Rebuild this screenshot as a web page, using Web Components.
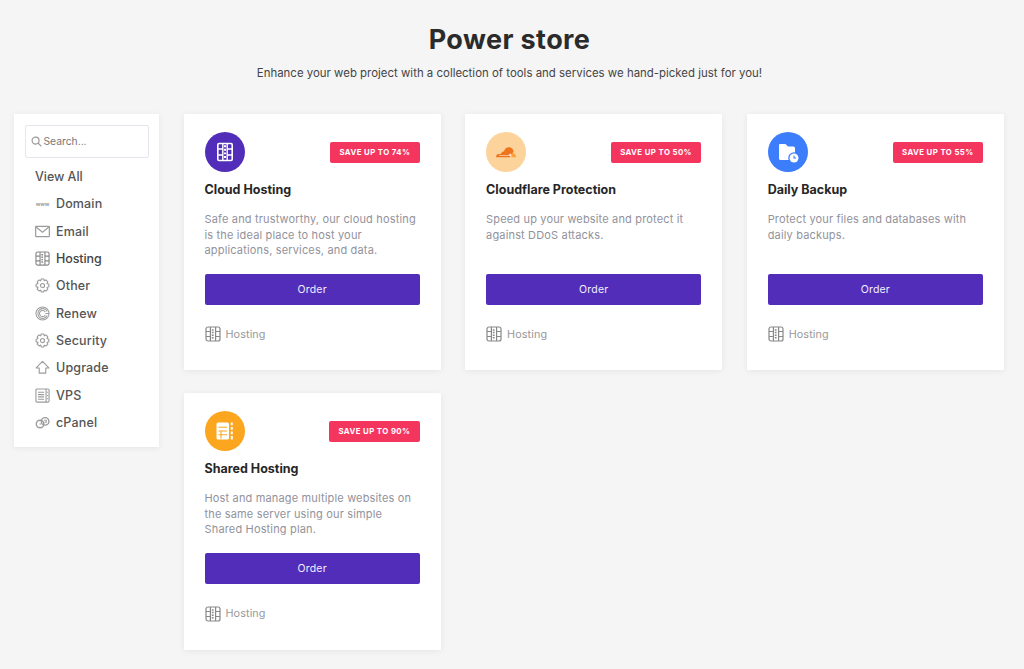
<!DOCTYPE html>
<html lang="en"><head><meta charset="utf-8"><title>Power store</title>
<style>
html,body{margin:0;padding:0;background:#f5f5f5;font-family:Inter,"Liberation Sans",sans-serif;}
body{height:669px;overflow:hidden}
</style></head><body>
<power-store>
  <store-header slot="header" title="Power store" sub="Enhance your web project with a collection of tools and services we hand-picked just for you!"></store-header>
  <store-sidebar slot="side"></store-sidebar>
  <store-card slot="cards" icon="hosting" color="#512dba" save="SAVE UP TO 74%" name="Cloud Hosting">Safe and trustworthy, our cloud hosting is the ideal place to host your applications, services, and data.</store-card>
  <store-card slot="cards" icon="cloud" color="#fdd39c" save="SAVE UP TO 50%" name="Cloudflare Protection">Speed up your website and protect it against DDoS attacks.</store-card>
  <store-card slot="cards" icon="backup" color="#3b7dfb" save="SAVE UP TO 55%" name="Daily Backup">Protect your files and databases with daily backups.</store-card>
  <store-card slot="cards" icon="shared" color="#fca61f" save="SAVE UP TO 90%" name="Shared Hosting">Host and manage multiple websites on the same server using our simple Shared Hosting plan.</store-card>
</power-store>
<script>
const hostingGlyph = c => `<g fill="none" stroke="${c}" stroke-width="1.2"><rect x="1" y="1" width="14" height="14" rx="2"/><path d="M5.400 1v14M10.600 1v14"/><path d="M1 5.500h4.400M1 10.500h4.400M10.600 5.500H15M10.600 10.500H15"/><path d="M6.800 4h1.800M6.800 6.600h1.800M6.800 9.200h1.800M6.800 11.800h1.800" stroke-width="1.500"/></g>`;
const gearPath = "M6.600 1h2.800l.5 2 1.800-.9 2 2-.9 1.800 2 .7v2.800l-2 .7.9 1.800-2 2-1.800-.9-.7 1.900H6.600l-.5-2-1.800.9-2-2 .9-1.800-2-.7V6.600l2-.7-.9-1.800 2-2 1.800.9z";
const glyphs = {
  www: `<text x="8" y="10.500" text-anchor="middle" font-family="Inter,sans-serif" font-size="5.800" font-weight="700" fill="#a0a0a0" letter-spacing="-.2">www</text>`,
  mail: `<g fill="none" stroke="#9c9c9c" stroke-width="1.300"><rect x=".7" y="2.600" width="14.600" height="10.800" rx=".6"/><path d="M.8 3l7.200 5.800L15.200 3"/></g>`,
  hosting: hostingGlyph('#888'),
  gear: `<g fill="none" stroke="#9c9c9c" stroke-width="1.200" stroke-linejoin="round"><path d="${gearPath}"/><circle cx="8" cy="8" r="2.200"/></g>`,
  renew: `<g fill="none" stroke="#9c9c9c" stroke-width="1.100"><circle cx="8" cy="8" r="7"/><path d="M13 5.800A5.200 5.200 0 1 0 13 10.200"/><path d="M11 6.500A3.300 3.300 0 1 0 11 9.500M11 8h4"/></g>`,
  up: `<path d="M8 1.500L1.200 8.500h3.300v5.500h7V8.500h3.300z" fill="none" stroke="#9c9c9c" stroke-width="1.200" stroke-linejoin="round"/>`,
  vps: `<g fill="none" stroke="#9c9c9c" stroke-width="1.200"><rect x="1" y="1" width="14" height="14" rx="1.200"/><path d="M11.800 1v14M3.200 4.500h6.500M3.200 7h6.500M3.200 9.500h6.500M3.200 12h6.500M13.400 4v1M13.400 7.500v1M13.400 11v1"/></g>`,
  cpanel: `<g fill="none" stroke="#9c9c9c" stroke-width="1.500"><circle cx="5.400" cy="9.600" r="4"/><circle cx="10.800" cy="6.800" r="4"/><path d="M4.800 9.500h2M9.800 5.600h2.200v2.200H10" stroke-width="1.100"/></g>`
};
const bigIcons = {
  hosting: `<svg width="20" height="20" viewBox="0 0 20 20" fill="none" stroke="#fff"><rect x="2.800" y="1.500" width="14.400" height="17" rx="1.200" stroke-width="1.600"/><path d="M7.800 1.500v17M12.200 1.500v17" stroke-width="1.400"/><path d="M2.800 7h5M2.800 13h5M12.200 7h5M12.200 13h5" stroke-width="1.500"/><path d="M9 4.200h2M9 7.800h2M9 11.400h2M9 15h2" stroke-width="1.900"/></svg>`,
  cloud: `<svg width="22" height="11" viewBox="0 0 23 12"><path fill="#f0741c" d="M15.700 11.300H.7a3.400 3.400 0 0 1 3.300-3.600c.6-.1 1.200 0 1.700.3C6.400 5.700 8 4.600 9.400 4.600c.6-2.500 2.800-4.200 5.200-4.200 2.700 0 4.900 2 5.200 4.700z"/><path fill="#f9a23a" d="M17.300 11.300h5.300c.2-2.400-1.400-4.600-3.800-4.800l-.9-.1c-.1 1.800-.3 3.200-.6 4.900z"/><path fill="#fff" d="M4 8.700h12.500v.7H4z" opacity=".85"/><path fill="#fff" d="M15.300 8.200l.9-1.500.4 1.500 1.500.4-1.500.5-.4 1.500-.9-1.500-1.500-.5z"/></svg>`,
  backup: `<svg width="24" height="24" viewBox="0 0 24 24"><path fill="#fff" d="M4 4h5.500L12 6.500h5.500A1.500 1.500 0 0 1 19 8v10.500a1.500 1.500 0 0 1-1.500 1.500H4.500A1.500 1.500 0 0 1 3 18.500V5a1 1 0 0 1 1-1z"/><circle cx="18" cy="18" r="5.800" fill="#3b7dfb"/><circle cx="18" cy="18" r="4.500" fill="#fff"/><path d="M18 15.800V18h2.100" fill="none" stroke="#3b7dfb" stroke-width="1.100"/></svg>`,
  shared: `<svg width="20" height="20" viewBox="0 0 20 20"><rect x="1.500" y="1.500" width="12.500" height="17" rx="1.500" fill="#fff"/><path d="M3.500 6.200h8.500M3.500 10h8.500M3.500 13.800h8.500M6 10v7.500" stroke="#fca61f" stroke-width="1.100" fill="none"/><path d="M16.800 1.500v2.800M16.800 6v2.800M16.800 10.500v2.800M16.800 15v3.500" stroke="#fff" stroke-width="2"/></svg>`
};
class PowerStore extends HTMLElement{
  constructor(){super();this.attachShadow({mode:'open'}).innerHTML=`<style>
  :host{display:block;padding:0 20px 0 14px}
  .layout{display:grid;grid-template-columns:145px 1fr;column-gap:24.500px;align-items:start}
  .cards{display:grid;grid-template-columns:repeat(3,1fr);gap:22.800px 24.250px}
  </style><slot name="header"></slot><div class="layout"><slot name="side"></slot><div class="cards"><slot name="cards"></slot></div></div>`;}
}
class StoreHeader extends HTMLElement{
  constructor(){super();this.attachShadow({mode:'open'}).innerHTML=`<style>
  :host{display:block;text-align:center;height:114px;margin-right:-15px;margin-left:-14px}
  h1{margin:0;padding-top:22px;font-size:27px;line-height:36px;font-weight:700;letter-spacing:.4px;color:#2b2b2b}
  p{margin:0;padding-top:6px;font-size:11.400px;line-height:18px;color:#444;letter-spacing:.02px}
  </style><h1></h1><p></p>`;
  this.shadowRoot.querySelector('h1').textContent=this.getAttribute('title');
  this.shadowRoot.querySelector('p').textContent=this.getAttribute('sub');}
}
class SideItem extends HTMLElement{
  constructor(){super();this.attachShadow({mode:'open'}).innerHTML=`<style>
  :host{display:flex;align-items:center;gap:6px;height:27.300px;font-size:12.500px;font-weight:500;color:#555;letter-spacing:.15px}
  :host([strong]){color:#444;letter-spacing:-.1px}
  :host([plain]){letter-spacing:-.05px}
  svg{width:15px;height:15px;flex:none}
  </style><svg viewBox="0 0 16 16"></svg><slot></slot>`;
  const i=this.getAttribute('icon');const s=this.shadowRoot.querySelector('svg');
  if(i)s.innerHTML=glyphs[i];else s.remove();}
}
class StoreSidebar extends HTMLElement{
  constructor(){super();const items=[['www','Domain'],['mail','Email'],['hosting','Hosting',1],['gear','Other'],['renew','Renew'],['gear','Security'],['up','Upgrade'],['vps','VPS'],['cpanel','cPanel']];
  this.attachShadow({mode:'open'}).innerHTML=`<style>
  :host{display:block;height:333px;box-sizing:border-box;background:#fff;padding:11px 10px 0 11px;box-shadow:0 1px 6px rgba(0,0,0,.07)}
  .search{display:flex;align-items:center;gap:1.500px;height:33px;box-sizing:border-box;border:1px solid #e6e6ee;border-radius:2px;padding:0 0 1px 5px;font-size:10.300px;color:#777}
  .search svg{width:11px;height:11px}
  nav{padding:5px 0 0 10px}
  </style><div class="search"><svg viewBox="0 0 12 12" fill="none" stroke="#999" stroke-width="1.300"><circle cx="5" cy="5" r="3.800"/><path d="M7.800 7.800L11.300 11.300"/></svg><span>Search...</span></div>
  <nav><side-item plain>View All</side-item>${items.map(([i,t,s])=>`<side-item icon="${i}"${s?' strong':''}>${t}</side-item>`).join('')}</nav>`;}
}
class StoreCard extends HTMLElement{
  constructor(){super();this.attachShadow({mode:'open'}).innerHTML=`<style>
  :host{display:block;box-sizing:border-box;height:256.400px;background:#fff;padding:18px 21px 0;box-shadow:0 1px 6px rgba(0,0,0,.07);border-radius:1px}
  .top{display:flex;justify-content:space-between;align-items:flex-start;height:40px}
  .circle{width:40px;height:40px;border-radius:50%;display:flex;align-items:center;justify-content:center}
  .badge{margin-top:9.500px;height:21px;line-height:21px;padding:0 9.500px;background:#f4365f;color:#fff;font-size:7.800px;font-weight:700;letter-spacing:.4px;border-radius:2px}
  h3{margin:9px 0 0;font-size:12.500px;line-height:18px;font-weight:700;color:#262626}
  p{margin:13.300px 0 0;height:46px;font-size:11px;line-height:15.400px;color:#92929c;letter-spacing:.16px}
  button{display:block;width:100%;height:31px;margin-top:15.700px;border:0;border-radius:2px;background:#512dba;color:#f2eefc;font:400 10.500px Inter,"Liberation Sans",sans-serif;letter-spacing:.2px}
  .foot{display:flex;align-items:center;gap:5px;margin-top:21.400px;font-size:10.800px;color:#999;letter-spacing:.1px}
  .foot svg{width:16px;height:16px}
  </style><div class="top"><div class="circle" style="background:${this.getAttribute('color')}">${bigIcons[this.getAttribute('icon')]}</div><span class="badge">${this.getAttribute('save')}</span></div>
  <h3>${this.getAttribute('name')}</h3><p><slot></slot></p><button>Order</button>
  <div class="foot"><svg viewBox="0 0 16 16">${glyphs.hosting}</svg><span>Hosting</span></div>`;}
}
customElements.define('side-item',SideItem);
customElements.define('power-store',PowerStore);
customElements.define('store-header',StoreHeader);
customElements.define('store-sidebar',StoreSidebar);
customElements.define('store-card',StoreCard);
</script></body></html>
